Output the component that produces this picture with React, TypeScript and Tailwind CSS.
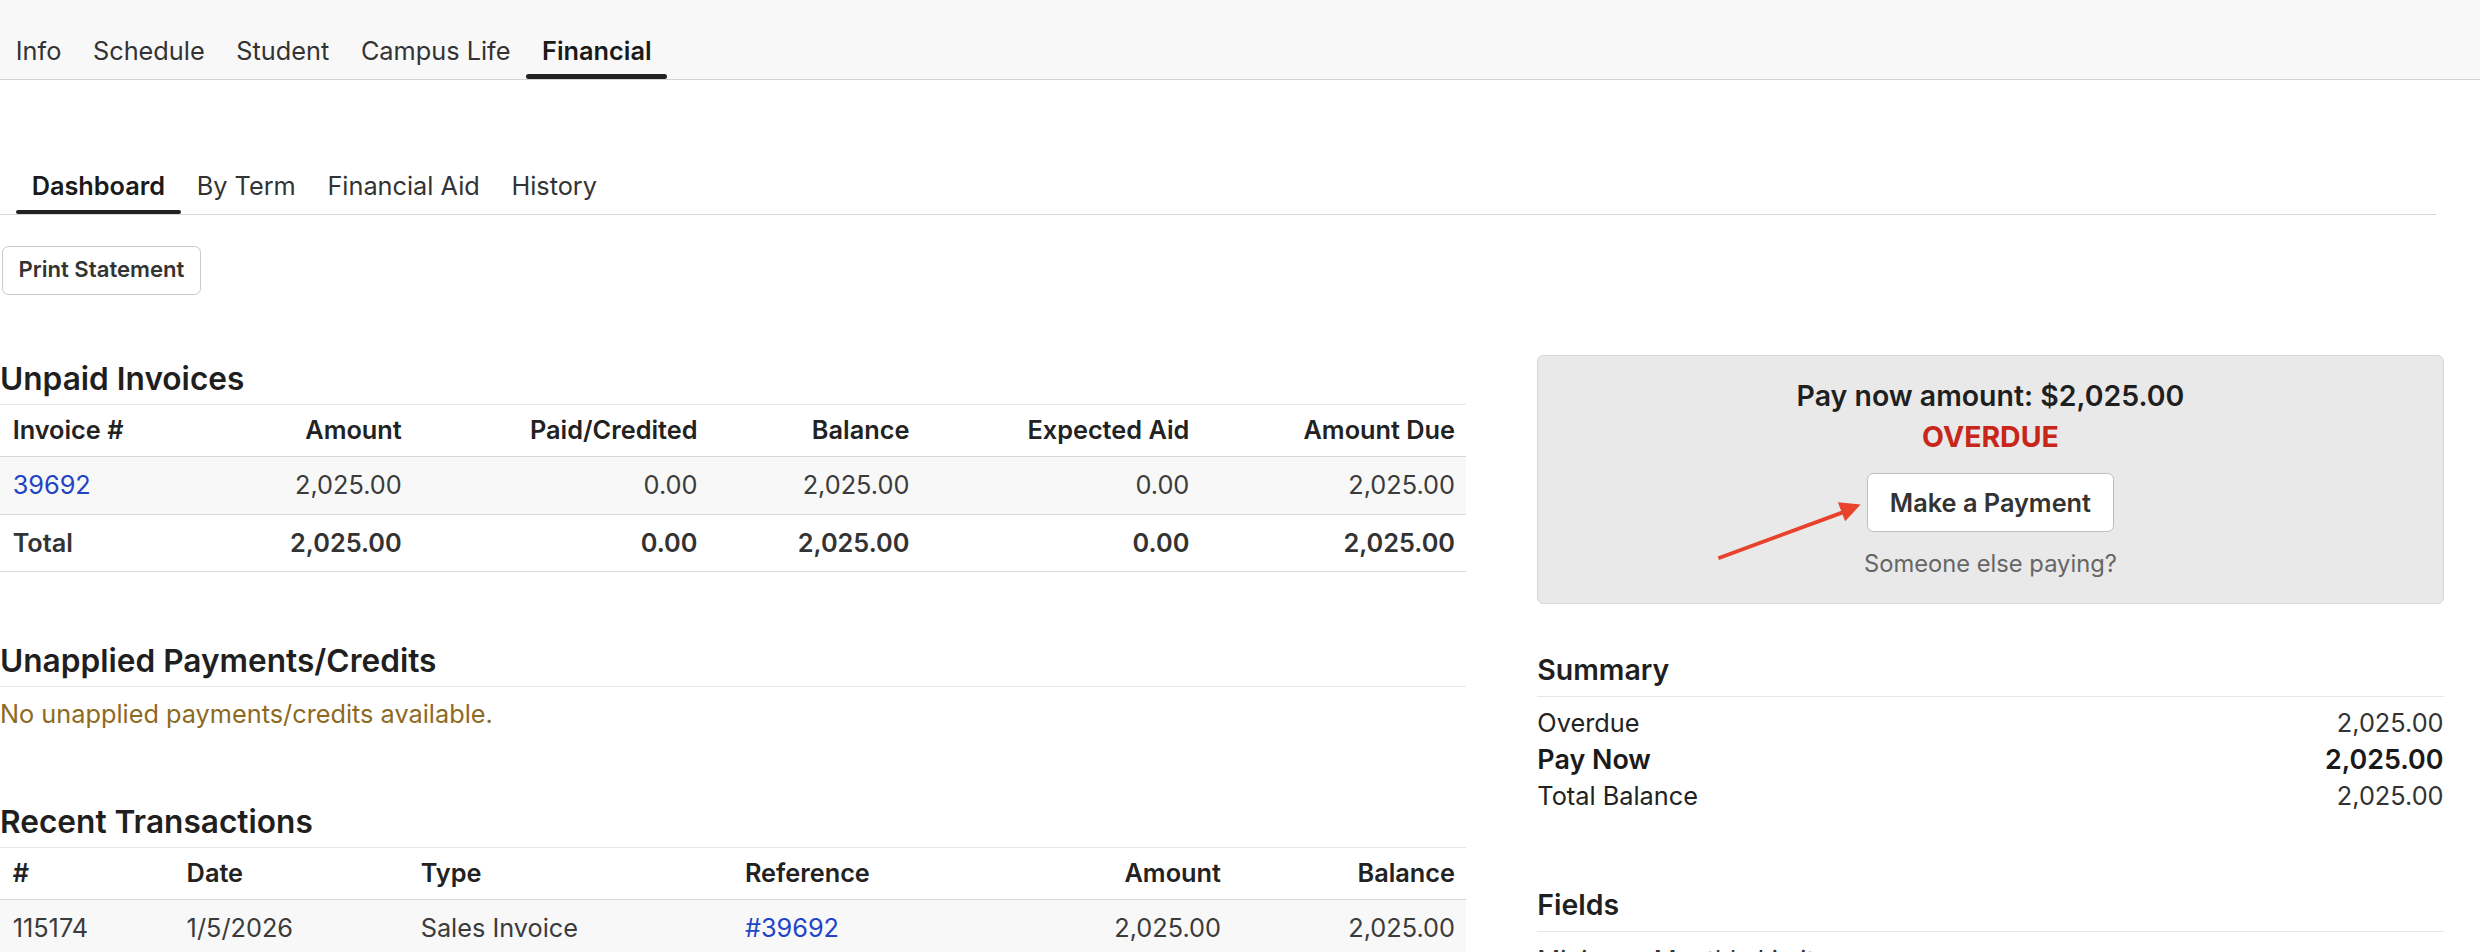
import React from "react";

const TOP_TABS = ["Info", "Schedule", "Student", "Campus Life", "Financial"];
const SUB_TABS = ["Dashboard", "By Term", "Financial Aid", "History"];

const invoiceCols = "grid grid-cols-[130px_132px_187px_134px_177px_168px]";
const txCols = "grid grid-cols-[110px_148px_205px_157px_160px_148px]";

function SectionTitle({ children, className = "" }: { children: React.ReactNode; className?: string }) {
  return (
    <h2 className={`text-xl font-semibold leading-7 pb-[2px] border-b border-[#e6e6e6] text-[#1f1f1f] ${className}`}>
      {children}
    </h2>
  );
}

function SideTitle({ children, className = "" }: { children: React.ReactNode; className?: string }) {
  return (
    <h3 className={`text-lg font-semibold leading-7 pb-[2px] border-b border-[#e6e6e6] text-[#1f1f1f] ${className}`}>
      {children}
    </h3>
  );
}

export default function App() {
  return (
    <div className="[zoom:1.5816] min-h-screen bg-white font-['Inter',sans-serif] text-base text-[#222]">
      {/* top nav */}
      <div className="flex bg-[#f8f8f8] border-b border-[#d4d4d4] pt-[20px]">
        {TOP_TABS.map((t) => {
          const active = t === "Financial";
          return (
            <div key={t} className="flex flex-col">
              <span
                className={`px-[10px] leading-6 ${
                  active ? "font-semibold text-[#1a1a1a]" : "text-[#333]"
                }`}
              >
                {t}
              </span>
              <div
                className={`mt-[3px] h-[3px] rounded-full ${active ? "bg-[#222]" : "bg-transparent"}`}
              />
            </div>
          );
        })}
      </div>

      {/* sub tabs */}
      <div className="mt-[55px] mr-[28px] flex pl-[10px] border-b border-[#d6d6d6]">
        {SUB_TABS.map((t) => {
          const active = t === "Dashboard";
          return (
            <div key={t} className="flex flex-col">
              <span
                className={`px-[10px] leading-6 ${
                  active ? "font-semibold text-[#1a1a1a]" : "text-[#333]"
                }`}
              >
                {t}
              </span>
              <div
                className={`mt-[3px] h-[3px] rounded-full ${active ? "bg-[#222]" : "bg-transparent"}`}
              />
            </div>
          );
        })}
      </div>

      <div className="mt-[19px] ml-[1px]">
        <button className="px-[10px] py-[5px] border border-[#c9c9c9] rounded-[4px] bg-white text-sm leading-5 font-semibold text-[#333]">
          Print Statement
        </button>
      </div>

      {/* main */}
      <div className="mt-[38px] flex gap-[45px] w-[1545px]">
        {/* left column */}
        <div className="w-[927px] pt-[1px]">
          <SectionTitle>Unpaid Invoices</SectionTitle>
          <div className="text-base">
            <div className={`${invoiceCols} border-b border-[#d6d6d6] font-semibold text-[#222] leading-6`}>
              <div className="px-2 py-[4px]">Invoice #</div>
              <div className="px-2 py-[4px] text-right">Amount</div>
              <div className="px-2 py-[4px] text-right">Paid/Credited</div>
              <div className="px-2 py-[4px] text-right">Balance</div>
              <div className="px-2 py-[4px] text-right">Expected Aid</div>
              <div className="px-2 py-[4px] text-right">Amount Due</div>
            </div>
            <div className={`${invoiceCols} bg-[#f8f8f8] border-b border-[#dadada] text-[#3b3b3b] leading-6`}>
              <div className="px-2 py-[6px]">
                <a className="text-[#1f45c6]">39692</a>
              </div>
              <div className="px-2 py-[6px] text-right">2,025.00</div>
              <div className="px-2 py-[6px] text-right">0.00</div>
              <div className="px-2 py-[6px] text-right">2,025.00</div>
              <div className="px-2 py-[6px] text-right">0.00</div>
              <div className="px-2 py-[6px] text-right">2,025.00</div>
            </div>
            <div className={`${invoiceCols} border-b border-[#dadada] font-semibold text-[#333] leading-6`}>
              <div className="px-2 py-[6px]">Total</div>
              <div className="px-2 py-[6px] text-right">2,025.00</div>
              <div className="px-2 py-[6px] text-right">0.00</div>
              <div className="px-2 py-[6px] text-right">2,025.00</div>
              <div className="px-2 py-[6px] text-right">0.00</div>
              <div className="px-2 py-[6px] text-right">2,025.00</div>
            </div>
          </div>

          <SectionTitle className="mt-[42px]">Unapplied Payments/Credits</SectionTitle>
          <p className="mt-[5px] leading-6 text-[#8e6a1f]">No unapplied payments/credits available.</p>

          <SectionTitle className="mt-[42px]">Recent Transactions</SectionTitle>
          <div className="text-base">
            <div className={`${txCols} border-b border-[#d6d6d6] font-semibold text-[#222] leading-6`}>
              <div className="px-2 py-[4px]">#</div>
              <div className="px-2 py-[4px]">Date</div>
              <div className="px-2 py-[4px]">Type</div>
              <div className="px-2 py-[4px]">Reference</div>
              <div className="px-2 py-[4px] text-right">Amount</div>
              <div className="px-2 py-[4px] text-right">Balance</div>
            </div>
            <div className={`${txCols} bg-[#f8f8f8] border-b border-[#dadada] text-[#3b3b3b] leading-6`}>
              <div className="px-2 py-[6px]">115174</div>
              <div className="px-2 py-[6px]">1/5/2026</div>
              <div className="px-2 py-[6px]">Sales Invoice</div>
              <div className="px-2 py-[6px]">
                <a className="text-[#1f45c6]">#39692</a>
              </div>
              <div className="px-2 py-[6px] text-right">2,025.00</div>
              <div className="px-2 py-[6px] text-right">2,025.00</div>
            </div>
          </div>
        </div>

        {/* right column */}
        <div className="w-[573px]">
          <div className="relative flex flex-col items-center rounded-[4px] border border-[#d6d6d6] bg-[#e8e9e8] pt-[12px] pb-[15px]">
            <div className="text-lg font-semibold leading-[26px] text-[#1f1f1f]">Pay now amount: $2,025.00</div>
            <div className="text-lg font-bold leading-[26px] text-[#c9261b]">OVERDUE</div>
            <button className="mt-[10px] px-[14px] py-[6px] rounded-[4px] border border-[#bdbdbd] bg-white font-semibold leading-6 text-[#333]">
              Make a Payment
            </button>
            <div className="mt-[10px] text-[15px] leading-5 text-[#666]">Someone else paying?</div>

            <svg
              className="absolute left-[110px] top-[88px]"
              width="100"
              height="44"
              viewBox="0 0 100 44"
            >
              <line x1="4" y1="40" x2="84" y2="10.5" stroke="#e8412c" strokeWidth="2.4" />
              <polygon points="94,6 84.2,16.6 79.6,4.6" fill="#e8412c" />
            </svg>
          </div>

          <SideTitle className="mt-[28px]">Summary</SideTitle>
          <div className="mt-[5px] text-[#222]">
            <div className="flex justify-between leading-[23px]">
              <span>Overdue</span>
              <span className="text-[#333]">2,025.00</span>
            </div>
            <div className="flex justify-between leading-[23px] text-[17px] font-semibold text-[#1a1a1a]">
              <span>Pay Now</span>
              <span>2,025.00</span>
            </div>
            <div className="flex justify-between leading-[23px]">
              <span>Total Balance</span>
              <span className="text-[#333]">2,025.00</span>
            </div>
          </div>

          <SideTitle className="mt-[44px]">Fields</SideTitle>
          <div className="mt-[6px] leading-6 text-[#333]">Minimum Monthly Limit</div>
        </div>
      </div>
    </div>
  );
}
